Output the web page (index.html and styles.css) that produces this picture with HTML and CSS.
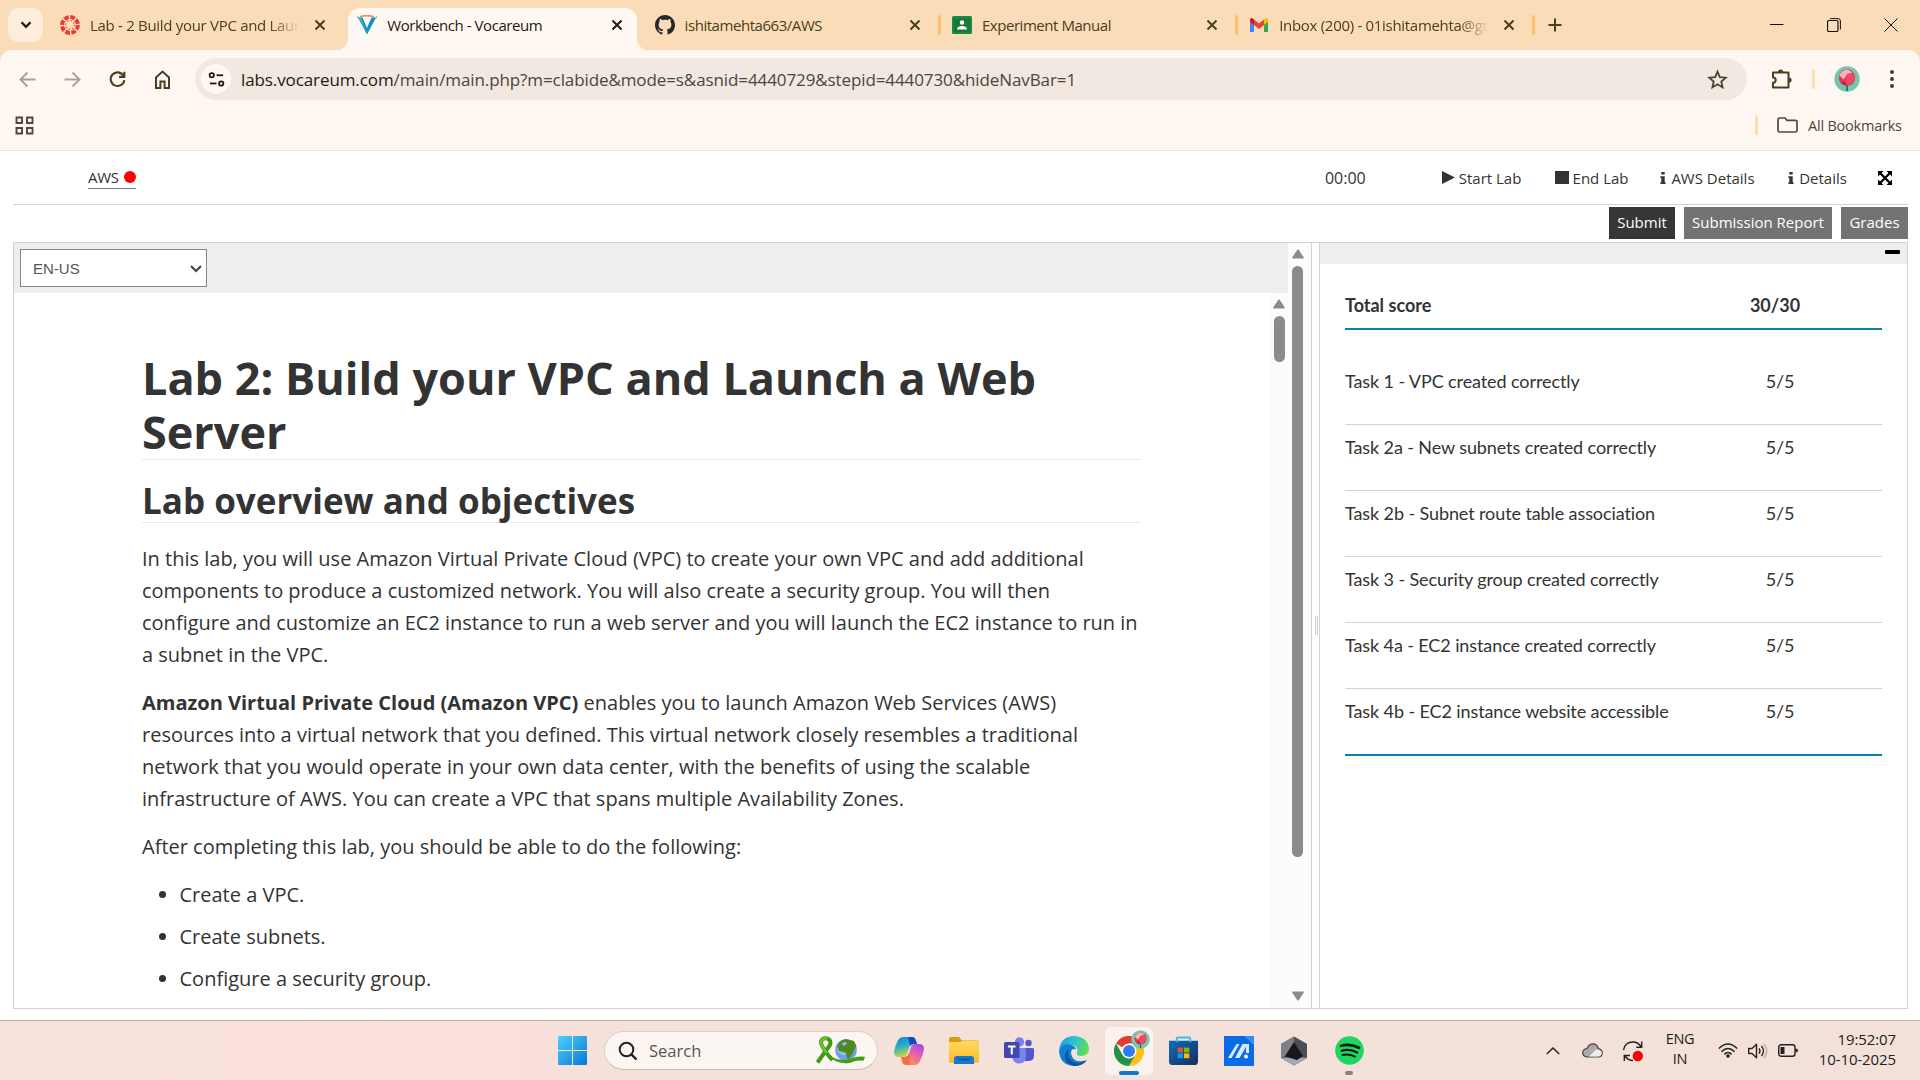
FILE: index.html
```html
<!DOCTYPE html>
<html lang="en">
<head>
<meta charset="utf-8">
<title>Workbench - Vocareum</title>
<link rel="stylesheet" href="styles.css">
</head>
<body>
<svg width="0" height="0" class="defs">
  <defs>
    <symbol id="x" viewBox="0 0 12 12"><path d="M1.5 1.5l9 9M10.5 1.5l-9 9" stroke="currentColor" stroke-width="2" fill="none"/></symbol>
    <symbol id="up" viewBox="0 0 12 10"><path d="M6 1.2L11 8.8H1z" fill="#8b8b8b" stroke="#8b8b8b" stroke-width="1.6" stroke-linejoin="round"/></symbol>
    <symbol id="rose" viewBox="0 0 26 26">
      <circle cx="13" cy="13" r="12.7" fill="#74c6b0"/>
      <path d="M13 25V17" stroke="#17705a" stroke-width="1.6"/>
      <path d="M6 16q3.500 4.500 7 3q3.500 1.500 7-3z" fill="#17806a"/>
      <circle cx="13" cy="11.500" r="8.200" fill="#e8354f"/>
      <path d="M5.500 9.500q2-5.500 8-6q3.500 1 5 3.500l-5 1-4 5.500z" fill="#f9b3bb"/>
      <path d="M13.500 8l5-1 2.500 5-4 6-4 1.500-2-4z" fill="#ee4a61"/>
      <path d="M8 16l3-.5 2 4q-3.500 0-5-3.500z" fill="#c91c3c"/>
    </symbol>
    <symbol id="info" viewBox="0 0 6 14"><path d="M1 0h4v3H1zM0 5h5v7h1v2H0v-2h1V7H0z" fill="#333"/></symbol>
  </defs>
</svg>

<header class="chrome">
  <div class="tabstrip">
    <button class="tab-search"><svg width="12" height="8" viewBox="0 0 12 8"><path d="M1.500 1.300L6 5.900l4.500-4.600" fill="none" stroke="#231a0c" stroke-width="2.300"/></svg></button>
    <div class="tab">
      <svg class="fav" viewBox="0 0 20 20"><circle cx="10" cy="10" r="7.900" fill="none" stroke="#e93d33" stroke-width="4" stroke-dasharray="4.700 1.505"/><circle cx="10" cy="10" r="4.400" fill="none" stroke="#e93d33" stroke-width="1.300" stroke-dasharray="1.200 2.255"/></svg>
      <span class="title fade">Lab - 2 Build your VPC and Laun</span>
      <svg class="close"><use href="#x"/></svg>
    </div>
    <div class="tab active">
      <svg class="fav" viewBox="0 0 20 20"><path d="M1 2.500h4.500L10 13l4.500-10.500H19L10 19.500z" fill="#0c92c4"/><path d="M1 2.500h3L10 18z" fill="#35b0d8"/><path d="M1 3.500L.5.800M19 3.500l.6-2.700" stroke="#8aa" stroke-width="1"/><path d="M3 1.800Q10-.7 17 1.800" stroke="#f58d5a" stroke-width="1.700" fill="none"/></svg>
      <span class="title">Workbench - Vocareum</span>
      <svg class="close"><use href="#x"/></svg>
    </div>
    <div class="tab">
      <svg class="fav" viewBox="0 0 16 16"><path fill="#24292f" d="M8 0C3.580 0 0 3.580 0 8c0 3.540 2.290 6.530 5.470 7.590.4.070.55-.17.55-.38 0-.19-.01-.82-.01-1.490-2.010.37-2.530-.49-2.690-.94-.09-.23-.48-.94-.82-1.130-.28-.15-.68-.52-.01-.53.63-.01 1.080.58 1.230.82.72 1.210 1.870.87 2.330.66.070-.52.28-.87.51-1.070-1.780-.2-3.640-.89-3.640-3.950 0-.87.31-1.590.82-2.150-.08-.2-.36-1.020.08-2.120 0 0 .67-.21 2.200.82.64-.18 1.320-.27 2-.27s1.360.09 2 .27c1.530-1.040 2.200-.82 2.200-.82.44 1.100.16 1.920.08 2.120.51.56.82 1.270.82 2.150 0 3.070-1.870 3.750-3.650 3.950.29.25.54.73.54 1.480 0 1.070-.01 1.930-.01 2.200 0 .21.15.46.55.38A8.010 8.010 0 0 0 16 8c0-4.420-3.580-8-8-8z"/></svg>
      <span class="title">ishitamehta663/AWS</span>
      <svg class="close"><use href="#x"/></svg>
      <i class="sep"></i>
    </div>
    <div class="tab">
      <svg class="fav" viewBox="0 0 20 20"><rect y="1" width="20" height="18" rx="1.500" fill="#1b8a3e"/><rect x="2" y="3" width="16" height="14" fill="#15793a"/><circle cx="10" cy="7.500" r="2.200" fill="#fff"/><path d="M5 14.500q0-3.500 5-3.500t5 3.500z" fill="#fff"/></svg>
      <span class="title">Experiment Manual</span>
      <svg class="close"><use href="#x"/></svg>
      <i class="sep"></i>
    </div>
    <div class="tab">
      <svg class="fav" viewBox="0 0 20 20"><path d="M1 5v12h4V9z" fill="#4285f4"/><path d="M19 5v12h-4V9z" fill="#34a853"/><path d="M5 4.500l5 4 5-4V10l-5 4-5-4z" fill="#ea4335"/><path d="M1 6V4.500Q1.500 2.500 3.500 3.300L5 4.500V10L1 7z" fill="#c5221f"/><path d="M19 6V4.500q-.5-2-2.500-1.200L15 4.500V10l4-3z" fill="#fbbc04"/></svg>
      <span class="title fade">Inbox (200) - 01ishitamehta@gm</span>
      <svg class="close"><use href="#x"/></svg>
      <i class="sep"></i>
    </div>
    <svg class="newtab" viewBox="0 0 14 14"><path d="M7 .5v13M.5 7h13" stroke="#4b3d20" stroke-width="2"/></svg>
    <div class="winbtns">
      <svg viewBox="0 0 14 14"><path d="M0 6.500h13.500" stroke="#111" stroke-width="1"/></svg>
      <svg viewBox="0 0 14 14"><rect x=".5" y="2.500" width="10.500" height="11" rx="1.500" fill="none" stroke="#111" stroke-width="1.200"/><path d="M3 .6h8q2.400 0 2.400 2.400v8.500" fill="none" stroke="#111" stroke-width="1"/></svg>
      <svg viewBox="0 0 14 14"><path d="M.5.500l13 13M13.500.500l-13 13" stroke="#111" stroke-width="1"/></svg>
    </div>
  </div>
  <div class="toolbar">
    <svg class="nav" viewBox="0 0 20 20"><path d="M17.500 10H3.500M10 3.300L3.300 10l6.700 6.700" fill="none" stroke="#aaa296" stroke-width="1.800"/></svg>
    <svg class="nav" viewBox="0 0 20 20"><path d="M2.500 10h14M10 3.300l6.700 6.700-6.700 6.700" fill="none" stroke="#aaa296" stroke-width="1.800"/></svg>
    <svg class="nav" viewBox="0 0 20 20"><path d="M15.700 6.500A6.500 6.500 0 1 0 16.500 10.500M16.500 2.500v5h-5" fill="none" stroke="#4b3d20" stroke-width="2"/></svg>
    <svg class="nav" viewBox="0 0 20 20"><path d="M3.800 8L10 2.500 16.200 8v10h-4.200v-6H8v6H3.800z" fill="none" stroke="#4b3d20" stroke-width="1.900"/></svg>
    <div class="omnibox">
      <span class="site"><svg width="17" height="17" viewBox="0 0 18 18"><g fill="none" stroke="#231a0c" stroke-width="1.900"><circle cx="4" cy="4.500" r="2.300"/><path d="M9 4.500h7"/><circle cx="14" cy="13.200" r="2.300"/><path d="M2 13.200h7"/></g></svg></span>
      <span class="url"><b>labs.vocareum.com</b>/main/main.php?m=clabide&amp;mode=s&amp;asnid=4440729&amp;stepid=4440730&amp;hideNavBar=1</span>
      <svg class="star" viewBox="0 0 20 20"><path d="M10 2.500l2.200 5.300 5.700.5-4.300 3.700 1.300 5.600-4.900-3-4.900 3L6.400 12 2.100 8.300l5.700-.5z" fill="none" stroke="#4b4232" stroke-width="1.700"/></svg>
    </div>
    <svg class="ext" viewBox="0 0 22 22"><path d="M2 4.500h15.500v15H2v-4.700a2.700 2.700 0 0 0 0-5.400z" fill="none" stroke="#4b3d20" stroke-width="2" stroke-linejoin="round"/><path d="M7 4a2.600 2.600 0 0 1 5.200 0M18 9.500a2.600 2.600 0 0 1 0 5.200" fill="#4b3d20"/></svg>
    <i class="sep pale"></i>
    <svg class="avatar"><use href="#rose"/></svg>
    <svg class="dots" viewBox="0 0 4 20"><g fill="#4b3d20"><circle cx="2" cy="3" r="2"/><circle cx="2" cy="10" r="2"/><circle cx="2" cy="17" r="2"/></g></svg>
  </div>
  <div class="bookmarks">
    <svg class="grid" viewBox="0 0 19 19"><g fill="none" stroke="#51463a" stroke-width="1.900"><path d="M1.500 1.500h5.500v5.500H1.500zM12 1.500h5.500v5.500H12zM1.500 12h5.500v5.500H1.500zM12 12h5.500v5.500H12z"/></g></svg>
    <i class="sep pale"></i>
    <svg class="folder" viewBox="0 0 21 16"><path d="M1 2.500Q1 1 2.500 1H8l2 2.300h8.500q1.500 0 1.500 1.500v8.700q0 1.500-1.500 1.500h-16Q1 15 1 13.500z" fill="none" stroke="#51463a" stroke-width="1.700"/></svg>
    <span class="all">All Bookmarks</span>
  </div>
</header>

<main class="page">
  <div class="labbar">
    <div class="aws"><span>AWS</span><i></i></div>
    <span class="timer">00:00</span>
    <a class="a-start"><svg width="13" height="13" viewBox="0 0 13 13"><path d="M0 0l13 6.500L0 13z" fill="#333"/></svg><span>Start Lab</span></a>
    <a class="a-end"><svg width="14" height="13" viewBox="0 0 14 13"><path d="M0 0h14v13H0z" fill="#333"/></svg><span>End Lab</span></a>
    <a class="a-aws"><svg width="6" height="12"><use href="#info"/></svg><span>AWS Details</span></a>
    <a class="a-det"><svg width="6" height="12"><use href="#info"/></svg><span>Details</span></a>
    <svg class="expand" viewBox="0 0 14 14"><path d="M2 2l10 10M12 2L2 12" stroke="#000" stroke-width="2.200"/><path d="M0 0h5.500L0 5.500zM14 0v5.500L8.500 0zM0 14V8.500L5.500 14zM14 14H8.500L14 8.500z"/></svg>
  </div>
  <div class="actions">
    <button class="dark">Submit</button><button>Submission Report</button><button>Grades</button>
  </div>
  <div class="panes">
    <section class="left">
      <div class="docwrap">
        <div class="langbar"><div class="select"><span>EN-US</span><svg width="12" height="8" viewBox="0 0 12 8"><path d="M1 1l5 5 5-5" fill="none" stroke="#444" stroke-width="2.100"/></svg></div></div>
        <div class="docrow">
          <article class="doc">
            <h1>Lab 2: Build your VPC and Launch a Web<br>Server</h1>
            <h2>Lab overview and objectives</h2>
            <p>In this lab, you will use Amazon Virtual Private Cloud (VPC) to create your own VPC and add additional<br>components to produce a customized network. You will also create a security group. You will then<br>configure and customize an EC2 instance to run a web server and you will launch the EC2 instance to run in<br>a subnet in the VPC.</p>
            <p><strong>Amazon Virtual Private Cloud (Amazon VPC)</strong> enables you to launch Amazon Web Services (AWS)<br>resources into a virtual network that you defined. This virtual network closely resembles a traditional<br>network that you would operate in your own data center, with the benefits of using the scalable<br>infrastructure of AWS. You can create a VPC that spans multiple Availability Zones.</p>
            <p>After completing this lab, you should be able to do the following:</p>
            <ul><li>Create a VPC.</li><li>Create subnets.</li><li>Configure a security group.</li></ul>
          </article>
          <div class="scroll inner"><svg><use href="#up"/></svg><i></i></div>
        </div>
      </div>
      <div class="scroll outer"><svg><use href="#up"/></svg><i></i><svg class="down"><use href="#up"/></svg></div>
    </section>
    <div class="splitter"><i></i></div>
    <section class="right">
      <div class="rbar"><i></i></div>
      <div class="scores">
        <div class="row total"><span>Total score</span><span class="s">30/30</span></div>
        <div class="row first"><span>Task 1 - VPC created correctly</span><span class="s">5/5</span></div>
        <div class="row"><span>Task 2a - New subnets created correctly</span><span class="s">5/5</span></div>
        <div class="row"><span>Task 2b - Subnet route table association</span><span class="s">5/5</span></div>
        <div class="row"><span>Task 3 - Security group created correctly</span><span class="s">5/5</span></div>
        <div class="row"><span>Task 4a - EC2 instance created correctly</span><span class="s">5/5</span></div>
        <div class="row last"><span>Task 4b - EC2 instance website accessible</span><span class="s">5/5</span></div>
      </div>
    </section>
  </div>
</main>

<footer class="taskbar">
  <svg class="i-win" viewBox="0 0 29 29"><defs><linearGradient id="w" x1="0" y1="0" x2="1" y2="1"><stop offset="0" stop-color="#4cd0fb"/><stop offset="1" stop-color="#0a78d6"/></linearGradient></defs><path d="M0 1q0-1 1-1h13v14H0zM15 0h13q1 0 1 1v13H15zM0 15h14v14H1q-1 0-1-1zM15 15h14v13q0 1-1 1H15z" fill="url(#w)"/></svg>
  <div class="search">
    <svg width="20" height="20" viewBox="0 0 20 20"><circle cx="8.500" cy="8.500" r="6.800" fill="none" stroke="#222" stroke-width="2"/><path d="M13.300 13.300L18.500 18.500" stroke="#222" stroke-width="2.400"/></svg>
    <span>Search</span>
    <svg class="ribbon" width="50" height="30" viewBox="0 0 50 30">
      <circle cx="31" cy="14" r="10.800" fill="#6f9fe8"/><circle cx="29" cy="12" r="7" fill="#93bdf3"/>
      <path d="M22 10q3-6 9-7l8 2 2.500 5-2 3-2 5-3.500 5-2-1-1-5-3-1-4-1z" fill="#4d8c1c"/>
      <path d="M27 7l4-1 1 2-4 2z" fill="#93bdf3"/>
      <path d="M2.500 26.500L15 9q1.500-5.500-3-6.500Q6 1.500 6 7q2 7 11.500 17" fill="none" stroke="#3f9c12" stroke-width="4"/>
      <path d="M12 2.500Q6 1.500 6 7q1.500 5 6 10" fill="none" stroke="#68c82a" stroke-width="2.500"/>
      <path d="M17 22q8 6 18 4 7-3 13-2l1-2.500q-6-1-13 2-10 3-19-1.500z" fill="#3fa014" stroke="#3fa014" stroke-width="1.500"/>
    </svg>
  </div>
  <svg class="i-cop" viewBox="0 0 30 28"><defs><linearGradient id="c1" x1="0" y1="0" x2=".3" y2="1"><stop offset="0" stop-color="#1b7fe0"/><stop offset=".5" stop-color="#25b0c9"/><stop offset="1" stop-color="#d4d43c"/></linearGradient><linearGradient id="c2" x1=".8" y1="0" x2=".2" y2="1"><stop offset="0" stop-color="#a24be8"/><stop offset=".5" stop-color="#f0679c"/><stop offset="1" stop-color="#fba03c"/></linearGradient></defs>
    <path d="M9 0h9q3 0 4 4l1 3h-3q-4 0-5 4l-2 6q-1 3-4 3H5q-5 0-5-5 1-6 4-12 2-3 5-3z" fill="url(#c1)"/><path d="M14 0h4q3 0 4 4l1 3h-3q-3 0-4 2z" fill="#1846c8"/>
    <path d="M21 28h-9q-3 0-4-4l-1-4h3q4 0 5-4l2-6q1-3 4-3h4q5 0 5 5-1 6-4 12-2 4-5 4z" fill="url(#c2)"/><path d="M16 28h-4q-3 0-4-4l-1-4h3q4 0 5-4z" fill="#f3643c" opacity=".75"/></svg>
  <svg class="i-fol" viewBox="0 0 30 27"><defs><linearGradient id="f" x1="0" y1="0" x2="0" y2="1"><stop offset="0" stop-color="#ffd95e"/><stop offset="1" stop-color="#fcb92a"/></linearGradient></defs><path d="M0 2q0-2 2-2h8l3 3.500h15q2 0 2 2V9H0z" fill="#dd9a0d"/><path d="M0 6q0-1 1-1h9q2 0 3-1h15q2 0 2 2v18q0 2-2 2H2q-2 0-2-2z" fill="url(#f)"/><path d="M5 27v-5q0-3 3-3h14q3 0 3 3v5z" fill="#1679cf"/><path d="M9 22.500h12" stroke="#0a4f98" stroke-width="1.500"/></svg>
  <svg class="i-tea" viewBox="0 0 30 27"><circle cx="15.500" cy="5" r="4.700" fill="#7b83eb"/><circle cx="24.500" cy="6" r="3.200" fill="#5059c9"/><path d="M20 11h8.500q1.500 0 1.500 1.500v6q0 5-5 5.500h-4z" fill="#5059c9"/><path d="M9 11h11q2 0 2 2v6q0 7.500-7 7.500-6 0-7-7z" fill="#7b83eb"/><rect y="5" width="15.500" height="16" rx="1.500" fill="#4248b0"/><path d="M4 9.500h7.500M7.750 9.500v8" stroke="#fff" stroke-width="2"/></svg>
  <svg class="i-edge" viewBox="0 0 30 30"><defs><linearGradient id="e1" x1="0" y1=".3" x2="1" y2=".5"><stop offset="0" stop-color="#1b9de2"/><stop offset=".5" stop-color="#2fc3cf"/><stop offset="1" stop-color="#66e04c"/></linearGradient></defs><path d="M0 14Q2 0 15.500 0 29 1 30 13q-.5 7-8 7-5 0-4-3 2-6-4.500-8Q5 8 0 14z" fill="url(#e1)"/><path d="M0 15Q3 7 11 8.500q5 1 6 5-5-2-5 4 2 9 11 7.500 3 0 4-1-5 6-12 6Q1 29 0 15z" fill="#0f7fd0"/><path d="M10 13q-3 7 2.500 12 6 4 12 .5l3.500-1.500q-4 6-13 6-10-3-9-10 1-5 4-7z" fill="#11509c"/></svg>
  <div class="tile">
    <svg class="i-chr" viewBox="0 0 30 30"><path d="M15 15L2 7.500A15 15 0 0 1 28 7.500H15z" fill="#e33b2e"/><path d="M28 7.500H15l6.500 11.300L15 30a15 15 0 0 0 13-22.500z" fill="#fdc116"/><path d="M2 7.500A15 15 0 0 0 15 30l6.500-11.200L15 22.500 8.500 18.700z" fill="#229342"/><circle cx="15" cy="15" r="7.500" fill="#fff"/><circle cx="15" cy="15" r="6" fill="#327cf0"/></svg>
    <svg class="badge"><use href="#rose"/></svg>
    <i></i>
  </div>
  <svg class="i-sto" viewBox="0 0 30 30"><defs><linearGradient id="st" x1="0" y1="0" x2="1" y2="1"><stop offset="0" stop-color="#0d6cc0"/><stop offset="1" stop-color="#1b2d58"/></linearGradient></defs><path d="M0 5h30v21q0 4-4 4H4q-4 0-4-4z" fill="url(#st)"/><path d="M8 6.500V2.500Q8 1.500 9 1.500h12q1 0 1 1v4" fill="none" stroke="#2cc4f5" stroke-width="2"/><path d="M9 12h5.500v5H9z" fill="#f25022"/><path d="M15.500 12H21v5h-5.500z" fill="#7fba00"/><path d="M9 18h5.500v5H9z" fill="#00a4ef"/><path d="M15.500 18H21v5h-5.500z" fill="#ffb900"/></svg>
  <svg class="i-asu" viewBox="0 0 30 30"><path d="M0 0h30v30H0z" fill="#0a6be6"/><path d="M20 0h10v9z" fill="#3c8bee"/><path d="M4 22L12.500 8h3L7.500 22zM11 22L18.500 8H25v9h-3v-6l-6.500 11z" fill="#d7e8ff"/><circle cx="22" cy="20.500" r="2" fill="#fff"/></svg>
  <svg class="i-hex" viewBox="0 0 28 30"><path d="M14 .5l13 7.500v14L14 29.500 1 22V8z" fill="#54585f"/><path d="M14 1v5L5 20l-4 2V8z" fill="#7d8289"/><path d="M14 1l13 7v14l-5-2-8-14z" fill="#4a4e55"/><path d="M1 22l13-1 13 1-13 7.500z" fill="#a4a8ae"/><path d="M14 6L5 20.500l12 3.500 6-4z" fill="#17181c"/></svg>
  <div class="spot"><svg viewBox="0 0 29 29"><circle cx="14.500" cy="14.500" r="14.300" fill="#1ed760"/><g fill="none" stroke="#0c1a10" stroke-linecap="round"><path d="M6 9.800q9-2.500 18 2" stroke-width="2.700"/><path d="M6.700 14.700q8-2.200 15.500 1.800" stroke-width="2.200"/><path d="M7.500 19q6.500-1.500 12.500 1.600" stroke-width="1.800"/></g></svg><i></i></div>
  <div class="tray">
    <svg class="t-up" viewBox="0 0 14 8"><path d="M.8 7L7 1l6.200 6" fill="none" stroke="#222" stroke-width="1.500"/></svg>
    <svg class="t-cld" viewBox="0 0 21 15"><path d="M5 14Q.7 13.500.7 9.800.9 6 5 5.500 7 .8 11 .8q4 0 5.500 4.700Q20.300 6.500 20.300 10q-.2 4-4.300 4z" fill="#aaa" stroke="#444" stroke-width="1.200"/><path d="M7 13.500L14 6.500q6 .5 5.800 4Q19 13.500 16 13.500z" fill="#eee"/></svg>
    <svg class="t-syn" viewBox="0 0 22 22"><path d="M1.500 10Q3 2 11 2q5 0 8.500 5M19.700 1.500v5.700h-5.500M2.300 21v-5.500H8M3 16q3 4.500 8 4.500" fill="none" stroke="#222" stroke-width="1.400"/><circle cx="15.800" cy="16" r="5.200" fill="#f00"/></svg>
    <div class="lang">ENG<br>IN</div>
    <svg class="t-wif" viewBox="0 0 20 15"><g fill="none" stroke="#222" stroke-width="1.500"><path d="M.8 5.500q9.200-9 18.400 0M3.500 8.700q6.500-6.500 13 0M6.300 11.400q3.700-3.800 7.400 0"/></g><circle cx="10" cy="13" r="1.800" fill="#222"/></svg>
    <svg class="t-spk" viewBox="0 0 20 16"><path d="M.7 5.500H4L8.500 1.300v13.400L4 10.500H.7z" fill="none" stroke="#222" stroke-width="1.400" stroke-linejoin="round"/><path d="M11 5.300q2 2.700 0 5.400M13.500 3q4 5 0 10" fill="none" stroke="#222" stroke-width="1.300"/><path d="M16 1q5.500 7 0 14" fill="none" stroke="#bbaca6" stroke-width="1.300"/></svg>
    <svg class="t-bat" viewBox="0 0 20 13"><rect x=".7" y=".7" width="16.300" height="11.600" rx="2.500" fill="none" stroke="#222" stroke-width="1.400"/><path d="M2.500 3h4v7h-4z" fill="#222"/><path d="M17.500 4.500q2.500 0 2.500 2t-2.500 2z" fill="#222"/></svg>
    <div class="clock">19:52:07<br>10-10-2025</div>
  </div>
</footer>
</body>
</html>
```
FILE: styles.css
```css
* { box-sizing: border-box; }
body { margin: 0; width: 1920px; height: 1080px; overflow: hidden; background: #fff; color: #333; font-family: "Open Sans", "Noto Sans", sans-serif; display: flex; flex-direction: column; }
svg { display: block; flex: none; }
.defs { position: absolute; }
button { border: 0; font: inherit; padding: 0; }

.chrome { height: 151px; flex: none; background: #fff8f2; border-bottom: 1px solid #f3dfcf; color: #4b3d20; }
.tabstrip { height: 62px; background: #fadcb9; display: flex; padding-left: 8px; margin-bottom: -12px; }
.tab-search { width: 35px; height: 34px; margin: 8px 8px 0 0; border-radius: 11px; background: #feeddb; display: flex; align-items: center; justify-content: center; }
.tab { width: 297.3px; height: 50px; display: flex; align-items: center; padding-left: 9px; flex: none; position: relative; font-size: 15px; letter-spacing: -.45px; }
.fav { width: 20px; height: 20px; }
.title { width: 212px; margin-left: 10px; overflow: hidden; white-space: nowrap; }
.fade { -webkit-mask-image: linear-gradient(90deg, #000 180px, transparent 210px); mask-image: linear-gradient(90deg, #000 180px, transparent 210px); letter-spacing: -.3px; }
.close { width: 12px; height: 12px; margin-left: 12px; }
.sep { width: 3px; height: 20px; border-radius: 2px; background: #fbc16d; margin-left: 17px; }
.sep.pale { background: #fddcae; margin: 0; }
.active { width: 289px; margin-right: 8.300px; color: #231a0c; }
.active::before { content: ""; position: absolute; inset: 8px 0 0; background: #fff8f2; border-radius: 12px 12px 0 0; }
.active > * { z-index: 1; }
.active::after { content: ""; position: absolute; left: -12px; right: -12px; bottom: 0; height: 12px; background: radial-gradient(circle at 0 0, transparent 12px, #fff8f2 12.500px) left / 12px 12px no-repeat, radial-gradient(circle at 100% 0, transparent 12px, #fff8f2 12.500px) right / 12px 12px no-repeat; }
.newtab { width: 14px; height: 14px; margin: 18px 0 0 11px; }
.winbtns { margin: 18px 22px 0 auto; display: flex; gap: 43px; }
.winbtns svg { width: 14px; height: 14px; }

.toolbar { position: relative; height: 58px; background: #fff8f2; border-radius: 12px 12px 0 0; display: flex; align-items: center; padding: 0 0 0 17px; }
.nav { width: 21px; height: 21px; margin-right: 24px; }
.omnibox { width: 1552px; height: 42px; margin-left: -2px; border-radius: 21px; background: #f1e8e2; display: flex; align-items: center; padding-left: 6px; font-size: 17px; color: #4d453d; }
.site { width: 30px; height: 30px; border-radius: 50%; background: #fff8f2; display: flex; align-items: center; justify-content: center; }
.url { margin-left: 10px; width: 1464px; letter-spacing: -.1px; }
.url b { font-weight: 400; color: #231a0c; }
.star { width: 21px; height: 21px; margin-left: 2px; }
.ext { width: 22px; height: 22px; margin-left: 24px; }
.toolbar .sep { margin-left: 19px; }
.avatar { width: 26px; height: 26px; margin-left: 19px; }
.dots { width: 4px; height: 20px; margin-left: 30px; }
.bookmarks { height: 33px; display: flex; align-items: center; padding: 1px 0 0 15px; font-size: 14.500px; letter-spacing: -.22px; color: #4d453d; }
.grid { width: 19px; height: 19px; margin-right: auto; }
.folder { width: 21px; height: 16px; margin: 0 10px 0 19px; }
.all { width: 112px; }

.page { height: 869px; flex: none; padding: 0 12px 0 13px; font-size: 15px; }
.labbar { height: 54px; display: flex; align-items: center; border-bottom: 1px solid #d3d3d3; padding: 0 16px 0 75px; }
.aws { height: 23px; display: flex; align-items: center; gap: 5px; border-bottom: 1px solid #777; width: 48px; letter-spacing: -.3px; }
.aws i { width: 12px; height: 12px; border-radius: 50%; background: #f00; flex: none; }
.timer { margin-left: 1189px; width: 117px; font-size: 16px; }
.labbar a { display: flex; align-items: center; gap: 4px; }
.a-start { width: 113px; }
.a-end { width: 106px; }
.labbar .a-aws { width: 128px; gap: 5px; }
.labbar .a-det { width: 90px; gap: 5px; }
.expand { width: 14px; height: 14px; }
.actions { height: 37px; display: flex; justify-content: flex-end; gap: 9px; padding-top: 2px; }
.actions button { width: 67px; height: 32px; background: #737373; color: #fff; padding-bottom: 2px; }
.actions button:nth-child(2) { width: 148px; }
.actions .dark { background: #363636; width: 66px; }

.panes { height: 767px; border: 1px solid #d3d3d3; display: flex; }
.left { width: 1298px; display: flex; border-right: 1px solid #d3d3d3; }
.docwrap { width: 1274px; }
.langbar { height: 50px; background: #eee; padding: 6px; }
.select { width: 187px; height: 38px; border: 1px solid #858585; background: #fff; display: flex; align-items: center; justify-content: space-between; padding: 1px 4px 0 12px; font: 15px "Liberation Sans", Arial, sans-serif; color: #555; }
.docrow { display: flex; height: 715px; }
.doc { width: 1256px; padding: 58px 129px 0 128px; font-size: 20px; line-height: 32px; overflow: hidden; white-space: nowrap; }
h1 { margin: 0 0 16px; font-size: 45px; line-height: 54px; border-bottom: 1px solid #eaeaea; height: 109px; font-weight: 700; }
h2 { margin: 0 0 20px; font-size: 35px; line-height: 49px; height: 47px; border-bottom: 1px solid #eaeaea; }
p { margin: 0 0 16px; }
ul { margin: 0; padding-left: 37.500px; }
li { margin-bottom: 10px; }
.scroll { width: 18px; background: #fcfcfc; display: flex; flex-direction: column; align-items: center; }
.scroll svg { width: 12px; height: 10px; }
.scroll i { width: 11px; border-radius: 6px; background: #8b8b8b; margin-top: 7px; }
.inner { padding-top: 6px; }
.inner i { height: 46px; }
.outer { width: 23px; padding: 6px 4px 7px 0; }
.outer i { height: 591px; }
.scroll .down { margin-top: auto; transform: rotate(180deg); }
.splitter { width: 8px; border-right: 1px solid #d3d3d3; display: flex; align-items: center; justify-content: flex-end; }
.splitter i { width: 3px; height: 19px; border: 1px solid #ccc; border-width: 0 1px; margin-right: 1px; }
.right { flex: 1; }
.rbar { height: 21px; background: #eee; display: flex; justify-content: flex-end; padding: 7px 7px 0 0; }
.rbar i { width: 15px; height: 4px; border-radius: 1px; background: #000; }
.scores { margin: 0 25px; font: 18px/26px Lato, sans-serif; letter-spacing: -.1px; font-variant-ligatures: none; }
.row { display: grid; grid-template-columns: 390px 90px; height: 66px; padding-top: 9px; border-bottom: 1px solid #d3d3d3; }
.s { text-align: center; }
.total { padding-top: 28px; border-bottom: 2px solid #0582ab; font-weight: 700; grid-template-columns: 385px 90px; letter-spacing: 0; }
.row.total { padding-top: 28px; height: 66px; }
.row.first { height: 95px; padding-top: 38px; }
.row.last { border-bottom: 2px solid #0582ab; height: 67px; }

.taskbar { height: 60px; flex: none; border-top: 1px solid #b9afab; background: linear-gradient(90deg, #fae2dc 0, #f9e0da 540px, #f4e1da 640px, #f4e1da 1500px, #f3e0d8); display: flex; align-items: center; padding-left: 558px; color: #222; font-size: 16px; }
.i-win { width: 29px; height: 29px; }
.search { width: 274px; height: 39px; margin-left: 17px; border-radius: 20px; background: #fcf6f3; border: 1px solid #e2cfc8; border-bottom-color: #cdbcb5; display: flex; align-items: center; padding-left: 13px; color: #555; font-size: 16.500px; }
.search span { margin-left: 11px; width: 166px; }
.i-cop { width: 30px; height: 28px; margin-left: 16px; }
.i-fol { width: 30px; height: 27px; margin-left: 25px; }
.i-tea { width: 30px; height: 27px; margin-left: 25px; }
.i-edge { width: 30px; height: 30px; margin-left: 25px; }
.tile { width: 48px; height: 48px; margin-left: 16px; border-radius: 5px; background: #fbf1ed; position: relative; display: flex; align-items: center; justify-content: center; }
.i-chr { width: 30px; height: 30px; }
.badge { position: absolute; left: 26px; top: 3px; width: 19px; height: 19px; }
.tile i, .spot i { position: absolute; bottom: 0; left: 14px; width: 20px; height: 4px; border-radius: 2px; background: #0a78d4; }
.i-sto { width: 29px; height: 29px; margin-left: 16px; }
.i-asu { width: 30px; height: 30px; margin-left: 26px; }
.i-hex { width: 28px; height: 30px; margin-left: 26px; }
.spot { width: 29px; height: 48px; margin-left: 27px; position: relative; display: flex; align-items: center; }
.spot svg { width: 29px; height: 29px; }
.spot i { left: 10px; width: 8px; background: #8c807c; }
.tray { margin-left: auto; width: 374px; display: flex; align-items: center; line-height: 20px; }
.t-up { width: 14px; height: 8px; }
.t-cld { width: 21px; height: 15px; margin-left: 22px; }
.t-syn { width: 22px; height: 22px; margin-left: 19px; }
.lang { width: 30px; margin: 0 0 3px 21px; text-align: center; font-size: 14.500px; letter-spacing: -.3px; }
.t-wif { width: 20px; height: 15px; margin-left: 23px; }
.t-spk { width: 20px; height: 16px; margin-left: 10px; }
.t-bat { width: 20px; height: 13px; margin-left: 10px; }
.clock { width: 98px; margin-bottom: 3px; text-align: right; font-size: 15px; letter-spacing: -.1px; }
```
